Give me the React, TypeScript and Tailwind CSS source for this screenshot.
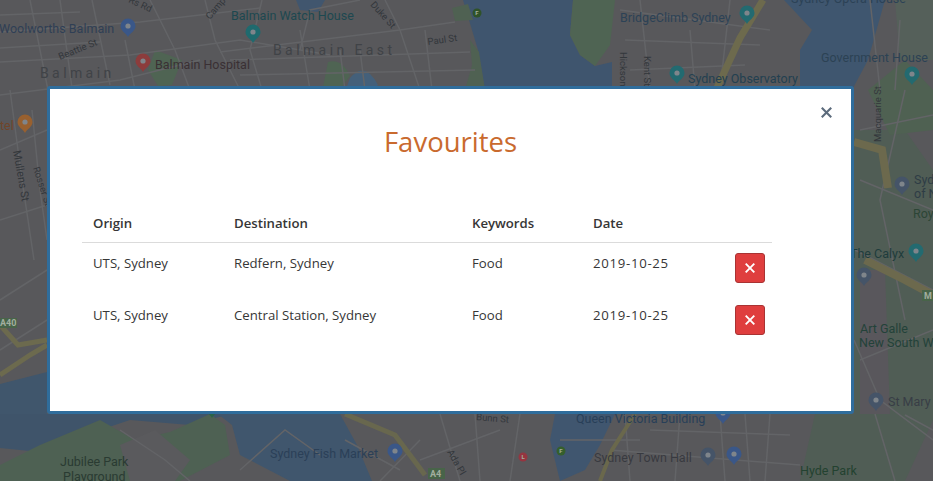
const favourites = [
  { origin: "UTS, Sydney", destination: "Redfern, Sydney", keywords: "Food", date: "2019-10-25" },
  { origin: "UTS, Sydney", destination: "Central Station, Sydney", keywords: "Food", date: "2019-10-25" },
];

const streets = [
  "M0 32 L140 22 L260 8", "M0 62 L130 55 L240 40 L330 55", "M0 95 L120 80 L200 60", "M30 0 L48 90", "M92 0 L110 85",
  "M150 0 L175 50 L190 90", "M205 0 L215 40 L240 90", "M262 0 L250 50 L262 90", "M300 30 L310 90", "M340 50 L345 90",
  "M220 52 L400 30 L455 22", "M300 50 L310 10 L360 0", "M385 0 L400 30 L420 90", "M0 150 L47 130", "M0 220 L47 205",
  "M10 90 L22 180 L34 260", "M32 110 L40 190 L47 240", "M0 300 L47 270", "M0 350 L47 320",
  "M0 15 L80 12", "M0 48 L100 42", "M60 0 L72 88", "M125 40 L135 90", "M230 60 L470 52", "M240 75 L475 70", "M360 50 L365 90", "M425 30 L432 90",
  "M620 10 L770 30", "M625 40 L760 45", "M630 70 L745 65", "M640 0 L650 90", "M690 30 L695 90", "M730 0 L720 90",
  "M870 0 L880 90", "M900 20 L895 90", "M905 90 L880 200 L905 320", "M860 130 L933 115", "M860 180 L933 210", "M855 250 L933 290",
  "M860 360 L933 330", "M875 414 L895 481", "M854 340 L880 400 L933 440", "M905 415 L933 430",
  "M240 470 L285 430 L320 455", "M120 430 L165 460 L190 481", "M475 414 L480 481", "M520 414 L510 481", "M560 440 L640 440",
  "M625 414 L630 481", "M680 414 L675 481", "M720 414 L725 481", "M770 414 L765 481", "M610 450 L800 465",
  "M345 440 L400 470", "M380 481 L420 440", "M440 414 L460 481", "M420 460 L500 430", "M650 430 L790 435", "M745 414 L750 481",
];

const pins = [
  { x: 128, y: 27, fill: "#3a5788" },
  { x: 253, y: 33, fill: "#1f6a6e" },
  { x: 143, y: 62, fill: "#8c3c3c" },
  { x: 747, y: 14, fill: "#236a70" },
  { x: 677, y: 74, fill: "#236a70" },
  { x: 912, y: 75, fill: "#236a70" },
  { x: 25, y: 123, fill: "#98602f" },
  { x: 902, y: 185, fill: "#455468" },
  { x: 916, y: 252, fill: "#236a70" },
  { x: 864, y: 276, fill: "#455468" },
  { x: 876, y: 401, fill: "#455468" },
  { x: 395, y: 452, fill: "#3a5788" },
  { x: 212, y: 408, fill: "#2a6548" },
  { x: 723, y: 414, fill: "#3a5788" },
  { x: 708, y: 456, fill: "#455468" },
  { x: 734, y: 455, fill: "#3a5788" },
];

function MapBackdrop() {
  return (
    <svg className="absolute inset-0" width="933" height="481" viewBox="0 0 933 481">
      <rect width="933" height="481" fill="#58585b" />
      {/* water */}
      <path d="M296 0 H325 L318 12 L300 10 Z" fill="#41566e" />
      <path d="M350 78 Q365 60 378 85 L372 92 H345 Z" fill="#44607a" />
      <path d="M463 0 H573 L570 35 L580 55 L595 66 L612 62 V90 H485 L478 50 Z" fill="#3f556e" />
      <path d="M784 0 H885 L868 60 L852 90 H800 L800 50 L812 30 Z" fill="#3f566f" />
      <path d="M0 414 H230 L190 425 L130 420 L70 440 L40 452 L0 448 Z" fill="#3f546a" />
      <path d="M218 414 H340 L357 445 L372 481 H290 L240 455 L232 425 Z" fill="#40566d" />
      <path d="M0 384 L47 372 V414 H0 Z" fill="#40566c" />
      <path d="M555 414 H615 L600 445 L585 470 L560 481 L550 440 Z" fill="#40566f" />
      {/* parks */}
      <path d="M452 8 L468 4 L473 20 L455 21 Z" fill="#4f6152" />
      <path d="M470 40 L479 52 L485 90 H465 L472 65 Z" fill="#4f6152" />
      <path d="M573 0 H615 L610 45 L595 66 L580 55 L570 35 Z" fill="#4f6453" />
      <path d="M155 50 L182 60 L172 85 L158 86 L148 70 Z" fill="#4f6453" />
      <path d="M328 62 Q342 58 350 76 L338 92 H322 Z" fill="#4f6453" />
      <path d="M40 445 L100 420 L135 440 L170 432 L210 414 L225 425 L230 455 L180 481 H0 V465 Z" fill="#4e6153" />
      <path d="M120 445 L155 430 L190 460 L175 481 H130 Z" fill="#5a5a5d" />
      <path d="M854 130 H905 L933 170 V420 L905 481 H800 L815 414 H854 Z" fill="#505d55" />
      <path d="M868 90 L905 60 L933 90 V130 L890 135 Z" fill="#4f6152" />
      <path d="M860 270 H885 L890 414 H860 Z" fill="#59575c" />
      <path d="M895 0 H933 V60 L900 60 Z" fill="#55605a" />
      {streets.map((d) => (
        <path key={d} d={d} fill="none" stroke="#636467" strokeWidth="1.5" />
      ))}
      {/* main roads */}
      <path d="M763 0 L740 38 L716 90" fill="none" stroke="#6d6a4d" strokeWidth="7" />
      <path d="M854 142 L882 150 L888 188" fill="none" stroke="#6c694d" strokeWidth="8" />
      <path d="M865 260 L905 280 L933 295" fill="none" stroke="#6c694d" strokeWidth="8" />
      <path d="M0 325 L18 345 L47 340" fill="none" stroke="#6c6a4e" strokeWidth="5" />
      <path d="M0 375 L30 355 L47 345" fill="none" stroke="#6c6a4e" strokeWidth="5" />
      <path d="M345 414 L395 435 L425 475" fill="none" stroke="#68674e" strokeWidth="5" />
      <path d="M635 414 L612 450 L600 481" fill="none" stroke="#6a684c" strokeWidth="4" />
      {/* shield badges */}
      <rect x="0" y="318" width="17" height="10" fill="#486449" />
      <rect x="428" y="468" width="17" height="11" fill="#486449" />
      <rect x="922" y="290" width="11" height="11" fill="#486449" />
      {/* pins */}
      {pins.map((pin) => (
        <g key={pin.x} transform={`translate(${pin.x} ${pin.y})`}>
          <path d="M0 10 C-2 6 -7.5 4 -7.5 -1 A7.5 7.5 0 1 1 7.5 -1 C7.5 4 2 6 0 10 Z" fill={pin.fill} />
          <circle cx="0" cy="-1" r="2.6" fill="#7f858b" />
        </g>
      ))}
      <circle cx="477" cy="13" r="4.5" fill="#2f5228" />
      <circle cx="561" cy="451" r="4.5" fill="#355f2c" />
      <circle cx="523" cy="457" r="4.5" fill="#953540" />
      <g fontFamily="Roboto, sans-serif" fontSize="6" fontWeight="700" fill="#a2ae9f" textAnchor="middle">
        <text x="477" y="15">F</text>
        <text x="561" y="453">F</text>
        <text x="523" y="459">L</text>
      </g>
      <g fontFamily="Roboto, sans-serif" fontSize="12.5">
        <text x="-1" y="33" fill="#2f3f55">Woolworths Balmain</text>
        <text x="231" y="20" fill="#1d4850">Balmain Watch House</text>
        <text x="155" y="69" fill="#3a3034">Balmain Hospital</text>
        <text x="620" y="22" fill="#2c4256">BridgeClimb Sydney</text>
        <text x="688" y="83" fill="#234050">Sydney Observatory</text>
        <text x="821" y="62" fill="#2c4254">Government House</text>
        <text x="791" y="3" fill="#2c4256">Sydney Opera House</text>
        <text x="270" y="458" fill="#2b4058">Sydney Fish Market</text>
        <text x="576" y="423" fill="#283f58">Queen Victoria Building</text>
        <text x="594" y="462" fill="#383a40">Sydney Town Hall</text>
        <text x="60" y="466" fill="#2a3b32">Jubilee Park</text>
        <text x="63" y="481" fill="#2a3b32">Playground</text>
        <text x="800" y="475" fill="#234230">Hyde Park</text>
        <text x="888" y="406" fill="#383d46">St Mary</text>
        <text x="850" y="258" fill="#1e3c3c">The Calyx</text>
        <text x="860" y="333" fill="#234239">Art Galle</text>
        <text x="859" y="347" fill="#234239">New South W</text>
        <text x="914" y="184" fill="#2e3c45">Syd</text>
        <text x="914" y="198" fill="#2e3c45">of N</text>
        <text x="913" y="218" fill="#2c4536">Roy</text>
        <text x="0" y="130" fill="#70452a">tel</text>
      </g>
      <g fontFamily="Roboto, sans-serif" fontSize="14" fill="#404347" letterSpacing="3.4">
        <text x="273" y="55">Balmain East</text>
        <text x="40" y="78">Balmain</text>
      </g>
      <g fontFamily="Roboto, sans-serif" fontSize="9.5" fill="#33373b">
        <text x="428" y="45" transform="rotate(-8 428 45)">Paul St</text>
        <text x="60" y="60" transform="rotate(-22 60 60)">Beattie St</text>
        <text x="370" y="5" transform="rotate(48 370 5)">Duke St</text>
        <text x="128" y="2" transform="rotate(25 128 2)">Rs Rd</text>
        <text x="210" y="20" transform="rotate(-50 210 20)">Camp</text>
        <text x="620" y="52" transform="rotate(90 620 52)">Hickson R</text>
        <text x="644" y="56" transform="rotate(90 644 56)">Kent St</text>
        <text x="881" y="142" transform="rotate(-90 881 142)">Macquarie St</text>
        <text x="33" y="168" transform="rotate(72 33 168)">Rosser St</text>
        <text x="13" y="151" fontSize="11" transform="rotate(80 13 151)">Mullens St</text>
        <text x="476" y="420" transform="rotate(5 476 420)">Bunn St</text>
        <text x="447" y="452" transform="rotate(60 447 452)">Ada Pl</text>
      </g>
      <g fontFamily="Roboto, sans-serif" fontSize="9" fontWeight="700" fill="#a2ae9f">
        <text x="0" y="326">A40</text>
        <text x="430" y="477">A4</text>
        <text x="924" y="299">M</text>
      </g>
    </svg>
  );
}

function CrossIcon({ size, className }: { size: number; className: string }) {
  return (
    <svg width={size} height={size} viewBox="0 0 10 10" className={className} fill="none" stroke="currentColor" strokeWidth="1.9">
      <path d="M0.7 0.7 L9.3 9.3 M9.3 0.7 L0.7 9.3" />
    </svg>
  );
}

export default function App() {
  return (
    <div className="relative h-[481px] w-[933px] overflow-hidden font-['Open_Sans','Noto_Sans',sans-serif]">
      <MapBackdrop />
      <div className="relative ml-[47px] mt-[86px] h-[328px] w-[807px] rounded-[3px] border-[3.5px] border-[#2f6d9c] bg-white px-[32px] pt-[32px]">
        <button type="button" className="absolute right-[19px] top-[18px] text-[#5c6b7c]">
          <CrossIcon size={11} className="block" />
        </button>
        <h2 className="text-center text-[27.5px] leading-[42px] font-normal text-[#c96a2e]">Favourites</h2>
        <table className="mt-[45px] w-[690px] table-fixed border-collapse text-[13.2px] leading-[21px] text-[#363636]">
          <colgroup>
            <col className="w-[141px]" />
            <col className="w-[238px]" />
            <col className="w-[121px]" />
            <col className="w-[131px]" />
            <col />
          </colgroup>
          <thead>
            <tr className="border-b border-[#dbdbdb]">
              <th className="px-[11px] py-[5px] pb-[8px] text-left font-semibold">Origin</th>
              <th className="px-[11px] py-[5px] pb-[8px] text-left font-semibold">Destination</th>
              <th className="px-[11px] py-[5px] pb-[8px] text-left font-semibold">Keywords</th>
              <th className="px-[11px] py-[5px] pb-[8px] text-left font-semibold">Date</th>
              <th />
            </tr>
          </thead>
          <tbody>
            {favourites.map((row) => (
              <tr key={row.destination}>
                <td className="px-[11px] py-[10px] align-top">{row.origin}</td>
                <td className="px-[11px] py-[10px] align-top">{row.destination}</td>
                <td className="px-[11px] py-[10px] align-top">{row.keywords}</td>
                <td className="px-[11px] py-[10px] align-top tracking-[0.7px]">{row.date}</td>
                <td className="pb-[12px] pl-[22px] pt-[10px] align-top">
                  <button
                    type="button"
                    className="flex h-[30px] w-[30px] items-center justify-center rounded-[3px] border border-[#a93333] bg-[#df3e3e] text-white"
                  >
                    <CrossIcon size={10} className="block" />
                  </button>
                </td>
              </tr>
            ))}
          </tbody>
        </table>
      </div>
    </div>
  );
}
